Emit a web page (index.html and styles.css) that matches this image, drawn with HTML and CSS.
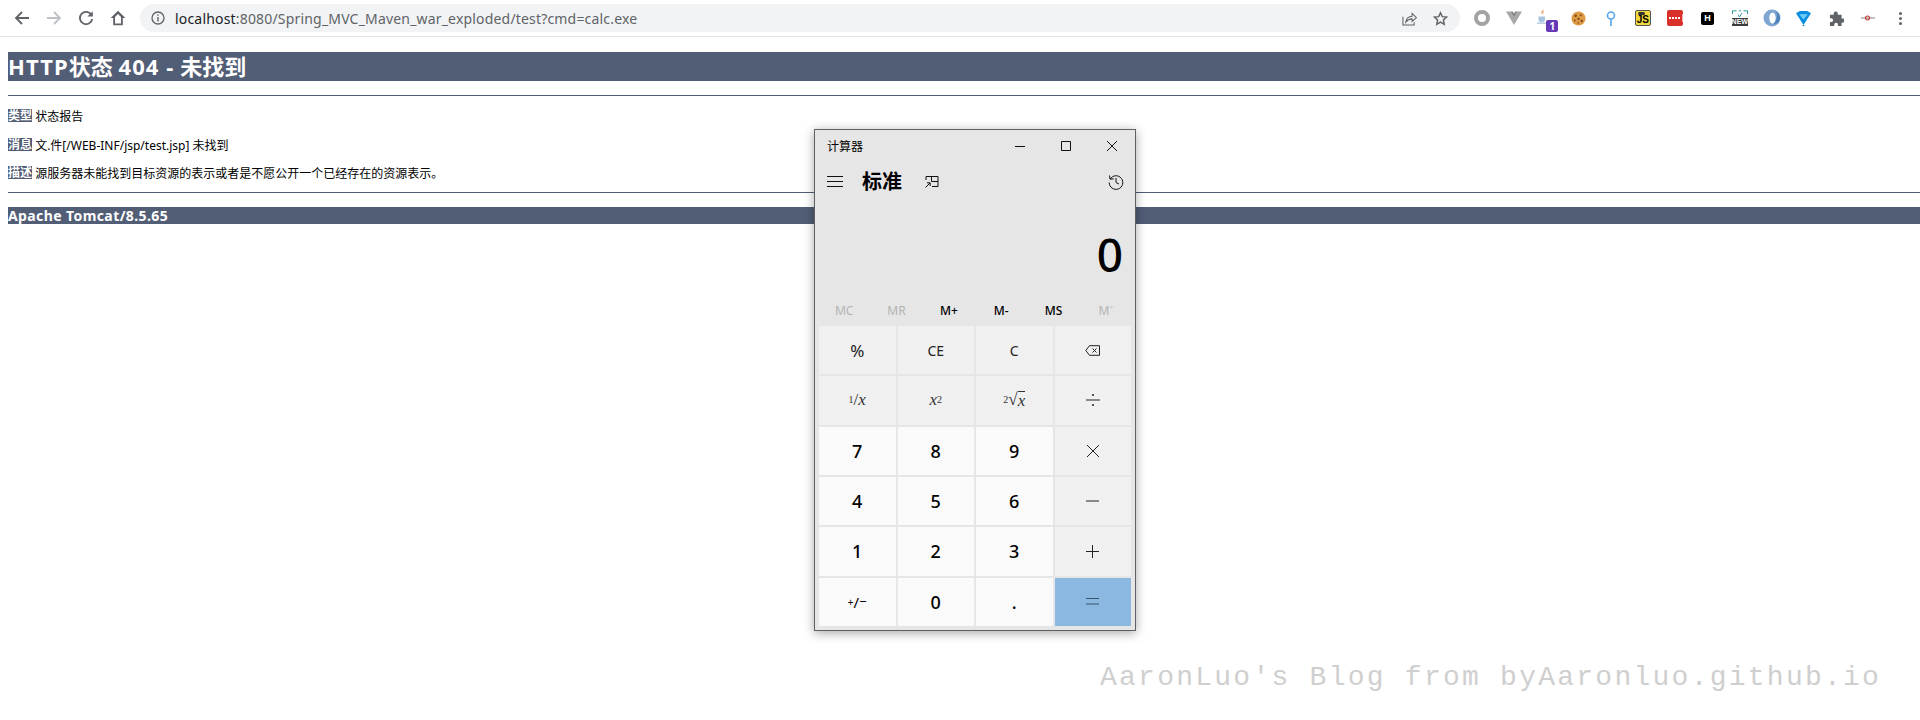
FILE: index.html
```html
<!DOCTYPE html>
<html lang="zh-CN">
  <head>
    <meta charset="UTF-8" />
    <title>HTTP状态 404 - 未找到</title>
    <link rel="stylesheet" href="styles.css">
  </head>
  <body>
    <!-- Browser toolbar -->
    <header class="toolbar">
      <div class="nav-icons">
        <svg class="nav-icon" viewBox="0 0 16 16"><path d="M15 8H2M8 2 2 8l6 6" fill="none" stroke="#5f6368" stroke-width="1.8"/></svg>
        <svg class="nav-icon" viewBox="0 0 16 16"><path d="M1 8h13M8 2l6 6-6 6" fill="none" stroke="#bdc1c6" stroke-width="1.8"/></svg>
        <svg class="nav-icon" viewBox="0 0 16 16"><path d="M13.6 5.2A6.2 6.2 0 1 0 14.2 9" fill="none" stroke="#5f6368" stroke-width="1.8"/><path d="M14.8 1.2v5.4H9.4z" fill="#5f6368"/></svg>
        <svg class="nav-icon" viewBox="0 0 16 16"><path d="M8 .8.6 8h2.600v7.200h9.600V8h2.600zM5 13.500V6.900l3-2.800 3 2.800v6.600z" fill="#5f6368"/></svg>
      </div>
      <div class="address-bar">
        <svg class="info-icon" viewBox="0 0 14 14"><circle cx="7" cy="7" r="6" fill="none" stroke="#5f6368" stroke-width="1.3"/><path d="M6.3 6h1.4v4.4H6.3zM6.3 3.4h1.4v1.4H6.3z" fill="#5f6368"/></svg>
        <span class="url"><b class="host">localhost</b>:8080/Spring_MVC_Maven_war_exploded/test?cmd=calc.exe</span>
        <svg class="bar-icon share" viewBox="0 0 16 16"><path d="M1 6v9h12v-3" fill="none" stroke="#5f6368" stroke-width="1.1"/><path d="M4 12c.6-4 3.2-6.2 6.8-6.4V2.600L15.400 7l-4.600 4.200V8.400c-2.600 0-4.800 1-6.800 3.600z" fill="none" stroke="#5f6368" stroke-width="1.1"/></svg>
        <svg class="bar-icon" viewBox="0 0 16 16"><path d="m8 1.800 1.900 4.200 4.600.5-3.400 3.100.9 4.600L8 11.900l-4 2.300.9-4.600-3.400-3.100 4.600-.5z" fill="none" stroke="#5f6368" stroke-width="1.5"/></svg>
      </div>
      <div class="extensions">
        <span class="ext"><svg viewBox="0 0 16 16" width="16" height="16"><circle cx="8" cy="8" r="6" fill="none" stroke="#a3a3a3" stroke-width="4"/></svg></span>
        <span class="ext"><svg viewBox="0 0 16 16" width="16" height="16"><path d="M0 1.500h4.500L8 7.500l3.500-6H16L8 15z" fill="#a8a8a8"/><path d="M4.500 1.500h2.300L8 3.600l1.200-2.100h2.300L8 7.500z" fill="#858585"/></svg></span>
        <span class="ext">
          <svg viewBox="0 0 16 20" width="13" height="17" class="java"><path d="M8.500 0c1 3-3.500 4.500-1.500 7.500C6 5 10.500 4 8.500 0zM10 3C8 4.500 7.500 6 9 8c-.5-2 0-3 1-5z" fill="#e07a3c"/><path d="M3 10h8v4c0 2-1.500 3-4 3s-4-1-4-3zM1 17.500h12v1.500H1z" fill="#a9c4de"/></svg>
          <span class="badge">1</span>
        </span>
        <span class="ext"><svg viewBox="0 0 16 16" width="15" height="15"><circle cx="8" cy="8" r="7.500" fill="#dd9a45"/><g fill="#7c4a1c"><circle cx="5" cy="5" r="1.300"/><circle cx="10.500" cy="4.500" r="1"/><circle cx="8" cy="8.500" r="1.200"/><circle cx="4" cy="10" r="1"/><circle cx="11.500" cy="10.500" r="1.300"/><circle cx="7.500" cy="12.800" r=".8"/></g></svg></span>
        <span class="ext"><svg viewBox="0 0 10 16" width="10" height="16"><circle cx="5" cy="5.500" r="3.500" fill="none" stroke="#56a5ee" stroke-width="1.600"/><path d="M5 9v7" stroke="#56a5ee" stroke-width="1.600"/></svg></span>
        <span class="ext"><span class="ext-js"><i class="js-toggle"></i><b>JS</b></span></span>
        <span class="ext"><span class="ext-red"><i></i><i></i><i></i><i></i><u></u></span></span>
        <span class="ext"><span class="ext-h">H</span></span>
        <span class="ext"><span class="ext-new"><svg viewBox="0 0 16 8" width="16" height="8"><path d="M.5 4V.8h4M7 .8h2M11.500.8h4V4" fill="none" stroke="#2c9a9a"/><path d="M6 4.500 7.500 7 10 3" fill="none" stroke="#2c9a9a"/></svg><b>NEW</b></span></span>
        <span class="ext"><svg viewBox="0 0 18 18" width="18" height="18"><circle cx="9" cy="9" r="8.500" fill="#7ea6d0"/><ellipse cx="9.500" cy="9" rx="3.200" ry="5.500" fill="#fff"/><path d="M13 2.500c2 4 1 9-3 13 5-.5 7-4 7-6.500 0-3-2-5.500-4-6.500z" fill="#4f83bb"/></svg></span>
        <span class="ext"><svg viewBox="0 0 16 16" width="15" height="15"><path d="M0 2.500 4 0h8l4 2.500L8 15z" fill="#0a8fe0"/><path d="M3.500 3.500h9L8 9z" fill="#6fd0f7"/><path d="M7 15h2v1H7z" fill="#0a6fb0"/></svg></span>
        <span class="ext"><svg viewBox="0 0 16 16" width="15" height="15"><path d="M1 4h4V2.800a2.200 2.200 0 0 1 4.400 0V4h4v4h1.200a2.200 2.200 0 0 1 0 4.400h-1.200V16H9.600v-1.400a2 2 0 0 0-4 0V16H1v-4.200h1.300a2 2 0 0 0 0-4H1z" fill="#5f6368"/></svg></span>
        <span class="ext"><svg viewBox="0 0 14 6" width="14" height="6"><path d="M0 3h14" stroke="#888" stroke-width="1"/><circle cx="6.500" cy="3" r="2" fill="none" stroke="#c0392b" stroke-width="1.200"/></svg></span>
        <span class="ext"><span class="dots"><i></i><i></i><i></i></span></span>
      </div>
    </header>

    <!-- Tomcat error page -->
    <main class="page">
      <h1><span class="wide">HTTP</span>状态 <span class="wide">404 -</span> 未找到</h1>
      <hr class="line" />
      <p class="row"><b class="tag">类型</b> 状态报告</p>
      <p class="row"><b class="tag">消息</b> 文.件[/WEB-INF/jsp/test.jsp] 未找到</p>
      <p class="row"><b class="tag">描述</b> 源服务器未能找到目标资源的表示或者是不愿公开一个已经存在的资源表示。</p>
      <hr class="line line-low" />
      <h3>Apache Tomcat/8.5.65</h3>
    </main>

    <!-- Calculator window -->
    <section class="calc">
      <div class="calc-title">
        <span class="calc-name">计算器</span>
        <div class="win-buttons">
          <svg class="win-btn" viewBox="0 0 10 10"><path d="M0 5.500h10" stroke="#111"/></svg>
          <svg class="win-btn" viewBox="0 0 10 10"><path d="M.5.500h9v9h-9z" fill="none" stroke="#111"/></svg>
          <svg class="win-btn" viewBox="0 0 10 10"><path d="m0 0 10 10M10 0 0 10" stroke="#111" fill="none"/></svg>
        </div>
      </div>
      <div class="calc-nav">
        <svg class="menu-icon" viewBox="0 0 16 11"><path d="M0 .5h16M0 5.500h16M0 10.500h16" stroke="#111"/></svg>
        <span class="calc-mode">标准</span>
        <svg class="top-icon" viewBox="0 0 14 12"><path d="M1 4V.5h12v10H7M6.500.5v5H13" fill="none" stroke="#111"/><path d="M.5 11.500 5 7M2 6.800h3.200V10" fill="none" stroke="#111"/></svg>
        <svg class="history-icon" viewBox="0 0 16 16"><path d="M2.200 5A6.800 6.800 0 1 1 1.200 8.500M1.500 1.500 2 5.200l3.700-.4" fill="none" stroke="#111"/><path d="M8 4v4.500l3 1.500" fill="none" stroke="#111"/></svg>
      </div>
      <div class="calc-display">0</div>
      <div class="calc-memory">
        <span class="off">MC</span><span class="off">MR</span><span>M+</span><span>M-</span><span>MS</span><span class="off">M<small>ˇ</small></span>
      </div>
      <div class="calc-keys">
        <button class="key fn pct">%</button>
        <button class="key fn small">CE</button>
        <button class="key fn small">C</button>
        <button class="key fn"><svg viewBox="0 0 15 11" width="15" height="11"><path d="M4.500.7h10v9.600h-10L.8 5.500z" fill="none" stroke="#222"/><path d="m7.500 3.500 4 4M11.500 3.500l-4 4" stroke="#222"/></svg></button>

        <button class="key fn math"><sup>1</sup>/<i>x</i></button>
        <button class="key fn math"><i>x</i><sup>2</sup></button>
        <button class="key fn math"><sup>2</sup>√<i class="over">x</i></button>
        <button class="key fn"><svg viewBox="0 0 14 14" width="14" height="14"><path d="M0 7h14" stroke="#222"/><circle cx="7" cy="2" r="1" fill="#222"/><circle cx="7" cy="12" r="1" fill="#222"/></svg></button>

        <button class="key num">7</button>
        <button class="key num">8</button>
        <button class="key num">9</button>
        <button class="key fn"><svg viewBox="0 0 12 12" width="12" height="12"><path d="m0 0 12 12M12 0 0 12" stroke="#222" fill="none"/></svg></button>

        <button class="key num">4</button>
        <button class="key num">5</button>
        <button class="key num">6</button>
        <button class="key fn"><svg viewBox="0 0 13 2" width="13" height="2"><path d="M0 1h13" stroke="#222"/></svg></button>

        <button class="key num">1</button>
        <button class="key num">2</button>
        <button class="key num">3</button>
        <button class="key fn"><svg viewBox="0 0 13 13" width="13" height="13"><path d="M0 6.500h13M6.500 0v13" stroke="#222"/></svg></button>

        <button class="key num sign"><sup>+</sup>/<sub>−</sub></button>
        <button class="key num">0</button>
        <button class="key num">.</button>
        <button class="key equal"><svg viewBox="0 0 13 7" width="13" height="7"><path d="M0 .5h13M0 6h13" stroke="#3a5268" stroke-width="1.200"/></svg></button>
      </div>
    </section>

    <div class="watermark">AaronLuo's Blog from byAaronluo.github.io</div>
  </body>
</html>
```

FILE: styles.css
```css
html,
body {
  margin: 0;
  height: 720px;
  overflow: hidden;
  background: #fff;
}

body {
  font-family: "Noto Sans", "Noto Sans CJK SC", sans-serif;
  color: #000;
}

/* Browser toolbar */
.toolbar {
  display: flex;
  align-items: center;
  height: 36px;
  border-bottom: 1px solid #dfe1e5;
}

.nav-icons {
  display: flex;
  align-items: center;
  gap: 16px;
  width: 140px;
  padding-left: 14px;
  box-sizing: border-box;
}

.nav-icon {
  width: 16px;
  height: 16px;
}

.address-bar {
  display: flex;
  align-items: center;
  width: 1320px;
  height: 28px;
  padding: 0 12px 0 11px;
  box-sizing: border-box;
  background: #f1f3f4;
  border-radius: 14px;
}

.info-icon {
  width: 14px;
  height: 14px;
  margin-right: 10px;
}

.url {
  flex: 1;
  font-size: 14px;
  letter-spacing: 0.18px;
  color: #5f6368;
  white-space: nowrap;
}

.host {
  font-weight: normal;
  color: #202124;
}

.bar-icon {
  width: 15px;
  height: 15px;
}

.share {
  margin-right: 16px;
}

.extensions {
  display: flex;
  align-items: center;
  margin-left: 6px;
}

.ext {
  position: relative;
  display: flex;
  align-items: center;
  justify-content: center;
  width: 32.2px;
  height: 28px;
}

.java {
  margin: -4px 8px 0 0;
}

.badge {
  position: absolute;
  left: 16px;
  top: 16px;
  width: 12px;
  height: 12px;
  background: #6739b6;
  border-radius: 2px;
  color: #fff;
  font-size: 10px;
  font-weight: bold;
  line-height: 12px;
  text-align: center;
}

.ext-js {
  position: relative;
  width: 14px;
  height: 14px;
  border: 1px solid #555;
  border-radius: 2px;
  background: #f0d83a;
  font: bold 10px/1 "Liberation Sans", sans-serif;
  text-align: right;
}

.ext-js b {
  position: absolute;
  right: 1px;
  bottom: 0;
}

.js-toggle {
  position: absolute;
  left: 2px;
  top: 1px;
  width: 7px;
  height: 3px;
  background: #333;
  border-radius: 2px;
}

.ext-red {
  display: flex;
  align-items: center;
  gap: 1px;
  width: 16px;
  height: 16px;
  padding-left: 2px;
  box-sizing: border-box;
  background: #d9302a;
  border-radius: 2px;
}

.ext-red i {
  width: 2px;
  height: 2px;
  background: #fff;
}

.ext-red u {
  width: 1px;
  height: 8px;
  margin-left: 1px;
  background: #f5b5b2;
}

.ext-h {
  width: 13px;
  height: 13px;
  background: #000;
  border-radius: 2px;
  color: #fff;
  font: bold 9px/13px "Liberation Sans", sans-serif;
  text-align: center;
}

.ext-new {
  display: flex;
  flex-direction: column;
}

.ext-new b {
  width: 16px;
  background: #3c3c3c;
  color: #fff;
  font: bold 7px/8px "Liberation Sans", sans-serif;
  text-align: center;
}

.dots {
  display: flex;
  flex-direction: column;
  gap: 2px;
}

.dots i {
  width: 3px;
  height: 3px;
  background: #5f6368;
  border-radius: 50%;
}

/* Tomcat error page */
.page {
  padding: 15px 0 0 8px;
}

h1 {
  margin: 0;
  height: 29px;
  background: #525d76;
  color: #fff;
  font-size: 22px;
  font-weight: bold;
  line-height: 29px;
}

.wide {
  letter-spacing: 1.1px;
}

.line {
  height: 1px;
  margin: 14px 0 13px;
  border: 0;
  background: #525d76;
}

.line-low {
  margin: 0 0 14px;
}

.row {
  height: 14px;
  margin: 0 0 14.5px;
  font-size: 12px;
  line-height: 16px;
}

.row:last-of-type {
  margin-bottom: 12px;
}

.tag {
  display: inline-block;
  height: 13px;
  background: #525d76;
  color: #fff;
  line-height: 13px;
  vertical-align: top;
}

h3 {
  margin: 0;
  height: 17px;
  background: #525d76;
  color: #fff;
  font-size: 14px;
  font-weight: bold;
  letter-spacing: 0.4px;
  line-height: 17px;
}

/* Calculator window */
.calc {
  position: absolute;
  left: 814px;
  top: 129px;
  display: flex;
  flex-direction: column;
  width: 322px;
  height: 502px;
  box-sizing: border-box;
  border: 1px solid #5f6062;
  background: #e6e6e6;
  box-shadow: 0 2px 10px rgba(0, 0, 0, 0.35);
}

.calc-title {
  display: flex;
  align-items: center;
  justify-content: space-between;
  height: 32px;
  padding: 0 18px 0 12px;
}

.calc-name {
  font-size: 12px;
}

.win-buttons {
  display: flex;
  gap: 36px;
}

.win-btn {
  width: 10px;
  height: 10px;
}

.calc-nav {
  display: flex;
  align-items: center;
  height: 39px;
  padding: 0 11px 0 12px;
}

.menu-icon {
  width: 16px;
  height: 11px;
}

.calc-mode {
  margin: -2px 0 0 19px;
  font-size: 20px;
  font-weight: bold;
}

.top-icon {
  width: 14px;
  height: 12px;
  margin-left: 23px;
}

.history-icon {
  width: 16px;
  height: 16px;
  margin-left: auto;
}

.calc-display {
  height: 95px;
  padding: 0 12px 0 0;
  font-size: 46px;
  font-weight: 500;
  line-height: 106px;
  text-align: right;
}

.calc-memory {
  display: grid;
  grid-template-columns: repeat(6, 1fr);
  height: 30px;
  padding: 0 3px;
  font-size: 12px;
  font-weight: 500;
  line-height: 30px;
  text-align: center;
}

.calc-memory .off {
  color: #b4b4b4;
  font-weight: normal;
}

.calc-memory small {
  font-size: 9px;
  line-height: 1;
  vertical-align: 1px;
}

.calc-keys {
  flex: 1;
  display: grid;
  grid-template-columns: repeat(4, 1fr);
  grid-template-rows: repeat(6, 1fr);
  gap: 2px;
  padding: 0 4px 4px;
}

.key {
  display: flex;
  align-items: center;
  justify-content: center;
  padding: 0;
  border: 0;
  font-family: inherit;
  color: #000;
}

.fn {
  background: #f0f0f0;
  font-size: 16px;
  color: #222;
}

.num {
  background: #fafafa;
  font-size: 18px;
  font-weight: 500;
}

.equal {
  background: #8ab8e0;
}

.small {
  font-size: 14px;
}

.pct {
  font-size: 17px;
}

.math {
  font-family: "Liberation Serif", serif;
  font-size: 17px;
  color: #333;
}

.math sup,
.sign sup {
  font-size: 10px;
  line-height: 1;
  vertical-align: 5px;
}

.over {
  border-top: 1px solid #333;
  line-height: 1;
}

.sign {
  font-size: 15px;
  font-weight: normal;
}

.sign sub {
  font-size: 13px;
  line-height: 1;
  vertical-align: -3px;
}

/* Blog watermark */
.watermark {
  position: absolute;
  left: 1100px;
  top: 662px;
  font-family: "Liberation Mono", monospace;
  font-size: 28px;
  letter-spacing: 2.25px;
  color: #cfcfcf;
  white-space: pre;
}
```
